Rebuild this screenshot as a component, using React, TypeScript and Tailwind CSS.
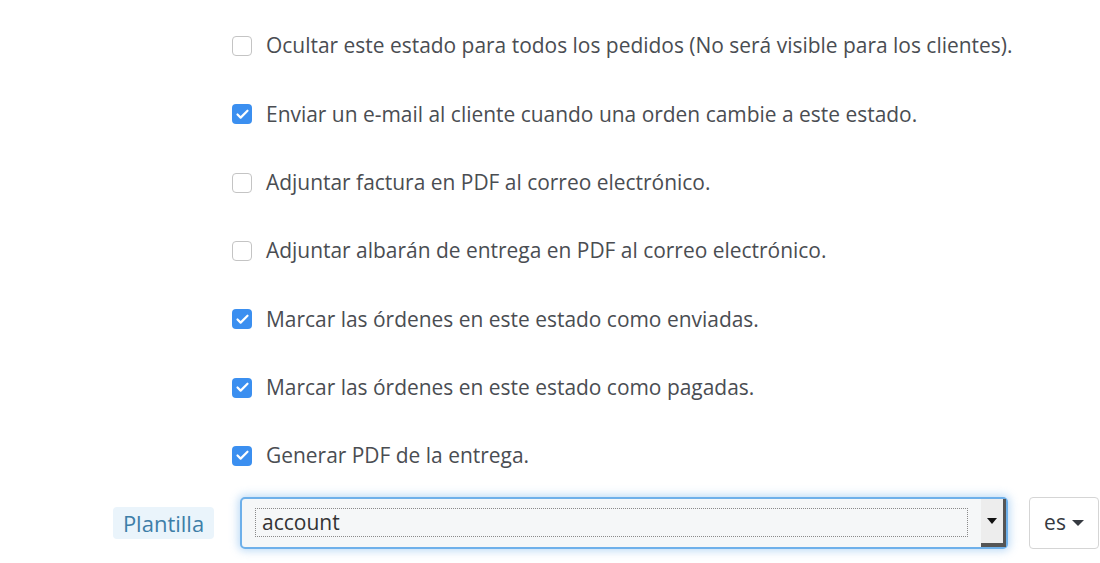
import { Check } from 'lucide-react';

const OPTIONS = [
  { label: 'Ocultar este estado para todos los pedidos (No será visible para los clientes).', checked: false },
  { label: 'Enviar un e-mail al cliente cuando una orden cambie a este estado.', checked: true },
  { label: 'Adjuntar factura en PDF al correo electrónico.', checked: false },
  { label: 'Adjuntar albarán de entrega en PDF al correo electrónico.', checked: false },
  { label: 'Marcar las órdenes en este estado como enviadas.', checked: true },
  { label: 'Marcar las órdenes en este estado como pagadas.', checked: true },
  { label: 'Generar PDF de la entrega.', checked: true },
];

function Checkbox({ checked }: { checked: boolean }) {
  if (checked) {
    return (
      <span className="flex h-[20px] w-[20px] shrink-0 items-center justify-center rounded-[4px] bg-[#3b8ff0]">
        <Check className="h-[15px] w-[15px] text-white" strokeWidth={3.5} />
      </span>
    );
  }
  return <span className="h-[20px] w-[20px] shrink-0 rounded-[4px] border border-[#c4c4c4] bg-white" />;
}

export default function App() {
  return (
    <div className="h-[563px] w-[1100px] overflow-hidden bg-white font-['Open_Sans',sans-serif] text-[#4a4d52]">
      <div className="flex flex-col gap-[48.33px] pl-[232px] pt-[36px]">
        {OPTIONS.map((opt, i) => (
          <label key={i} className="flex h-[20px] items-center gap-[14px] text-[20.95px]">
            <Checkbox checked={opt.checked} />
            <span className="whitespace-nowrap">{opt.label}</span>
          </label>
        ))}
      </div>

      {/* Template row */}
      <div className="mt-[31px] flex items-center">
        <div className="ml-[113px] flex h-[32px] w-[101px] items-center justify-center rounded-[4px] bg-[#eaf4fb] pt-[2px] text-[22px] text-[#3d7ea8]">
          Plantilla
        </div>
        <div className="ml-[26px] flex h-[52px] w-[768px] items-center rounded-[5px] border-2 border-[#6eb0ea] bg-[#f5f7f8] shadow-[0_0_8px_2px_rgba(110,176,234,0.45)]">
          <div className="ml-[13px] flex h-[29px] w-[713px] items-center border border-dotted border-[#8a8a8a] pl-[6px] text-[21px] text-[#333]">
            account
          </div>
          <div className="ml-auto flex h-full w-[25px] items-center justify-center border-b-[4px] border-r-[3px] border-[#555] bg-[#ededed]">
            <span className="h-0 w-0 border-x-[5px] border-t-[6px] border-x-transparent border-t-[#111]" />
          </div>
        </div>
        <div className="ml-[21px] flex h-[52px] w-[70px] items-center justify-center gap-[6px] rounded-[4px] border border-[#d5d5d5] bg-white text-[21px] text-[#363a41]">
          es
          <span className="h-0 w-0 border-x-[6px] border-t-[6px] border-x-transparent border-t-[#363a41]" />
        </div>
      </div>
    </div>
  );
}
